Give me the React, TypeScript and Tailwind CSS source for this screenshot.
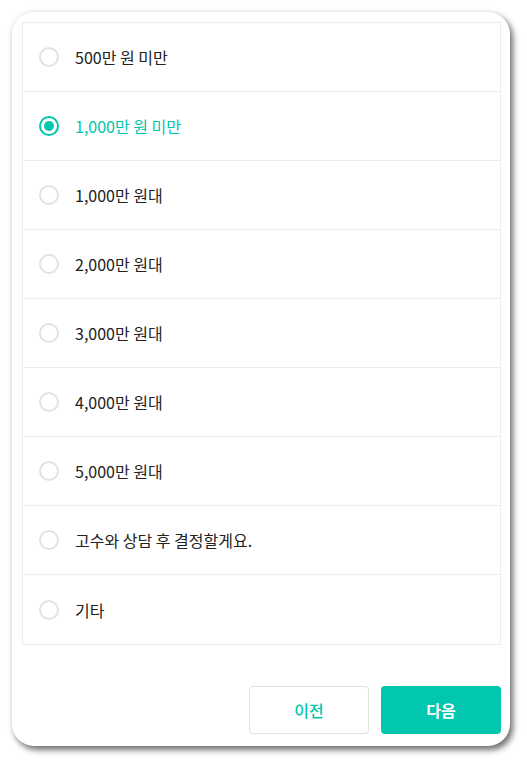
import React from "react";

const options = [
  "500만 원 미만",
  "1,000만 원 미만",
  "1,000만 원대",
  "2,000만 원대",
  "3,000만 원대",
  "4,000만 원대",
  "5,000만 원대",
  "고수와 상담 후 결정할게요.",
  "기타",
];

export default function App() {
  const selected = 1;
  return (
    <div
      className="w-[527px] h-[761px] bg-white pt-[12px] pl-[12px]"
      style={{ fontFamily: '"Noto Sans CJK KR", "Noto Sans", sans-serif' }}
    >
      <div className="w-[498px] h-[734px] bg-white rounded-[22px] shadow-[3px_4px_6px_rgba(0,0,0,0.55),0_0_6px_rgba(0,0,0,0.08)] p-[10px] pr-[9px] flex flex-col">
        <div className="border border-[#ececec] flex flex-col">
          {options.map((o, i) => (
            <div
              key={o}
              className={`h-[69px] flex items-center pl-[16px] ${i < options.length - 1 ? "border-b border-[#ececec]" : ""} ${i === 0 ? "h-[68px]" : ""}`}
            >
              {i === selected ? (
                <div className="w-[20px] h-[20px] rounded-full border-2 border-[#00c7ae] flex items-center justify-center">
                  <div className="w-[10px] h-[10px] rounded-full bg-[#00c7ae]" />
                </div>
              ) : (
                <div className="w-[20px] h-[20px] rounded-full border-2 border-[#e2e2e2]" />
              )}
              <span
                className={`ml-[16px] text-[16px] ${i === selected ? "text-[#00c7ae]" : "text-[#222222]"}`}
              >
                {o}
              </span>
            </div>
          ))}
        </div>
        <div className="flex justify-end gap-[12px] mt-[41px]">
          <button className="w-[120px] h-[48px] rounded-[4px] border border-[#e0e0e0] bg-white text-[#00c7ae] text-[16px] font-medium">
            이전
          </button>
          <button className="w-[120px] h-[48px] rounded-[4px] bg-[#00c7ae] text-white text-[16px] font-bold">
            다음
          </button>
        </div>
      </div>
    </div>
  );
}
